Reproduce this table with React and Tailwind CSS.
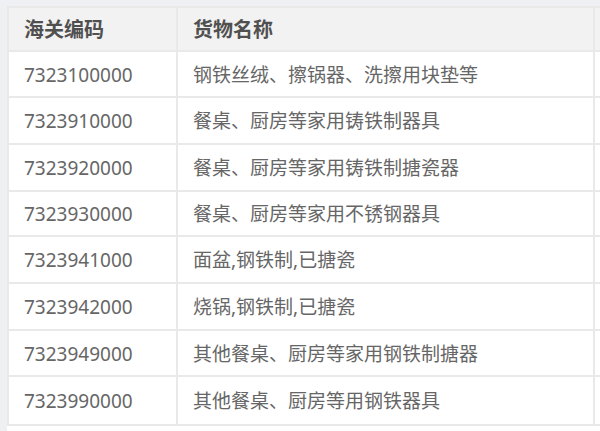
import React from "react";

// customs code rows
const rows = [
  { code: "7323100000", name: "钢铁丝绒、擦锅器、洗擦用块垫等", h: "h-[46px]" },
  { code: "7323910000", name: "餐桌、厨房等家用铸铁制器具", h: "h-[47px]" },
  { code: "7323920000", name: "餐桌、厨房等家用铸铁制搪瓷器", h: "h-[47px]" },
  { code: "7323930000", name: "餐桌、厨房等家用不锈钢器具", h: "h-[45px]" },
  { code: "7323941000", name: "面盆,钢铁制,已搪瓷", h: "h-[47px]" },
  { code: "7323942000", name: "烧锅,钢铁制,已搪瓷", h: "h-[47px]" },
  { code: "7323949000", name: "其他餐桌、厨房等家用钢铁制搪器", h: "h-[46px]" },
  { code: "7323990000", name: "其他餐桌、厨房等用钢铁器具", h: "h-[47px]" },
];

const App = () => {
  return (
    <div
      className="w-[600px] h-[431px] overflow-hidden bg-[#eef0f4] pt-[6px] pl-[7px]"
      style={{ fontFamily: '"Noto Sans", "Noto Sans CJK SC", sans-serif' }}
    >
      <div className="w-[700px] h-full bg-white">
        <div className="border-2 border-[#e9e9e9] border-r-0">
          {/* header */}
          <div className="grid grid-cols-[169px_417px_1fr] h-[44px] bg-[#f2f2f2] border-b-2 border-[#e9e9e9] text-[20px] font-bold text-[#505050]">
            <div className="flex items-center pl-[15px] pt-[1px] border-r-2 border-[#e9e9e9]">海关编码</div>
            <div className="flex items-center pl-[15px] pt-[1px] border-r-2 border-[#e9e9e9]">货物名称</div>
            <div></div>
          </div>
          {rows.map((r) => (
            <div
              key={r.code}
              className={`grid grid-cols-[169px_417px_1fr] ${r.h} border-b-2 border-[#e9e9e9] last:border-b-0 text-[19px] text-[#666666]`}
            >
              <div className="flex items-center pl-[15px] pt-[2px] border-r-2 border-[#e9e9e9]">{r.code}</div>
              <div className="flex items-center pl-[15px] pt-[2px] border-r-2 border-[#e9e9e9]">{r.name}</div>
              <div></div>
            </div>
          ))}
        </div>
      </div>
    </div>
  );
};

export default App;
